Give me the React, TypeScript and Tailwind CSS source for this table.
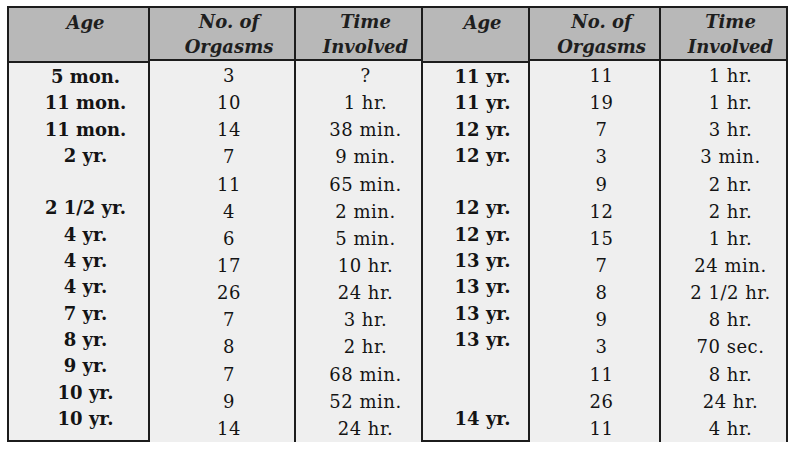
import React from "react";

const ageL = ["5 mon.", "11 mon.", "11 mon.", "2 yr.", "", "2 1/2 yr.", "4 yr.", "4 yr.", "4 yr.", "7 yr.", "8 yr.", "9 yr.", "10 yr.", "10 yr."];
const numL = ["3", "10", "14", "7", "11", "4", "6", "17", "26", "7", "8", "7", "9", "14"];
const timeL = ["?", "1 hr.", "38 min.", "9 min.", "65 min.", "2 min.", "5 min.", "10 hr.", "24 hr.", "3 hr.", "2 hr.", "68 min.", "52 min.", "24 hr."];
const ageR = ["11 yr.", "11 yr.", "12 yr.", "12 yr.", "", "12 yr.", "12 yr.", "13 yr.", "13 yr.", "13 yr.", "13 yr.", "", "", "14 yr."];
const numR = ["11", "19", "7", "3", "9", "12", "15", "7", "8", "9", "3", "11", "26", "11"];
const timeR = ["1 hr.", "1 hr.", "3 hr.", "3 min.", "2 hr.", "2 hr.", "1 hr.", "24 min.", "2 1/2 hr.", "8 hr.", "70 sec.", "8 hr.", "24 hr.", "4 hr."];

type ColProps = {
  width: string;
  head: [string, string];
  rows: string[];
  bold?: boolean;
  first?: boolean;
};

function Col({ width, head, rows, bold, first }: ColProps) {
  return (
    <div className={`flex flex-col ${width} ${first ? "" : "border-l-2 border-[#1c1c1c]"}`}>
      <div className="h-[55px] bg-[#b8b8b8] border-b-2 border-[#1c1c1c] flex flex-col items-center justify-center pl-[14px] pt-[1px] text-[18px] leading-[25px] italic font-bold text-[#1e1e1e]">
        <span>{head[0]}</span>
        <span>{head[1] || "\u00a0"}</span>
      </div>
      <div className={`flex-1 bg-[#efefef] flex flex-col items-center pl-[14px] ${bold ? "pt-[1px]" : "pt-[1px]"} text-[18px] text-[#141414]`}>
        {rows.map((r, i) => (
          <div
            key={i}
            className={
              bold
                ? "h-[26.3px] leading-[26.3px] font-bold whitespace-nowrap"
                : "h-[27.15px] leading-[27.15px] whitespace-nowrap tracking-[0.5px]"
            }
          >
            {r || "\u00a0"}
          </div>
        ))}
      </div>
    </div>
  );
}

export default function App() {
  return (
    <div className="w-[799px] h-[449px] bg-white pt-[6px] pl-[7px]" style={{ fontFamily: '"DejaVu Serif", "Liberation Serif", serif' }}>
      <div className="flex w-[781px] h-[436px] border-2 border-[#1c1c1c]">
        <Col first width="w-[139px]" head={["Age", ""]} rows={ageL} bold />
        <Col width="w-[146px]" head={["No. of", "Orgasms"]} rows={numL} />
        <Col width="w-[127px]" head={["Time", "Involved"]} rows={timeL} />
        <Col width="w-[107px]" head={["Age", ""]} rows={ageR} bold />
        <Col width="w-[131px]" head={["No. of", "Orgasms"]} rows={numR} />
        <Col width="w-[127px]" head={["Time", "Involved"]} rows={timeR} />
      </div>
    </div>
  );
}
